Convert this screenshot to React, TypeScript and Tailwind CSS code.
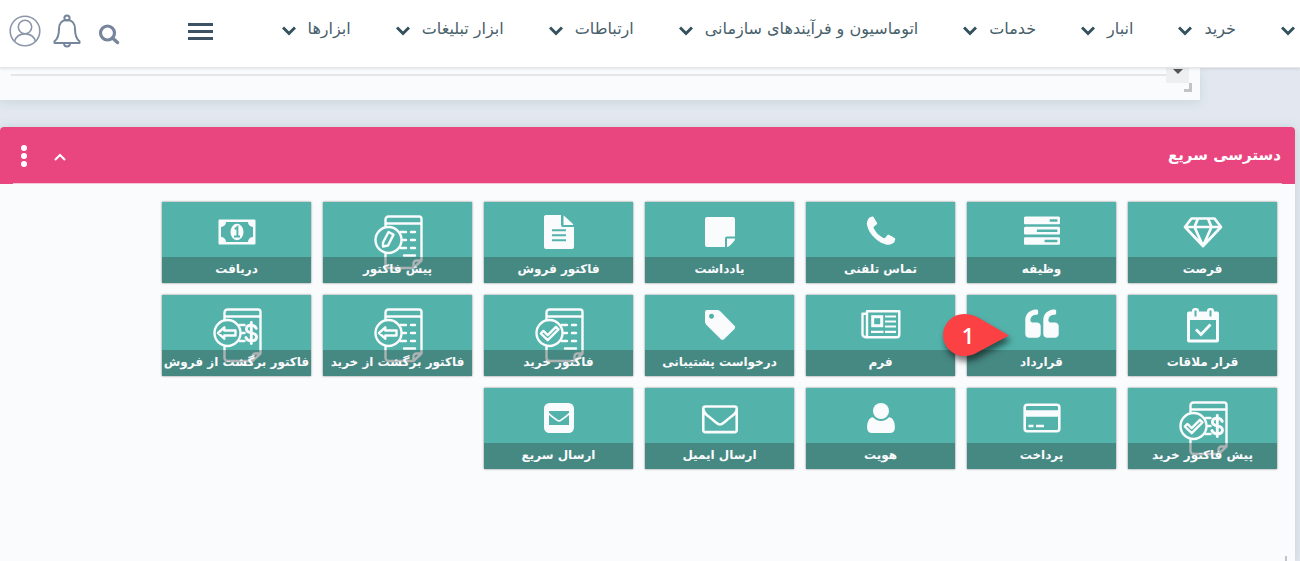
import type { ReactNode } from "react";

const Glyph = ({ d, className }: { d: string; className: string }) => (
  <svg viewBox="0 0 1792 1792" className={className} fill="currentColor" aria-hidden="true">
    <path d={d} />
  </svg>
);

const TASKS =
  "M1024 1408h640v-128h-640v128zm-384-512h1024v-128h-1024v128zm640-512h384v-128h-384v128zm512 832v256q0 26-19 45t-45 19h-1664q-26 0-45-19t-19-45v-256q0-26 19-45t45-19h1664q26 0 45 19t19 45zm0-512v256q0 26-19 45t-45 19h-1664q-26 0-45-19t-19-45v-256q0-26 19-45t45-19h1664q26 0 45 19t19 45zm0-512v256q0 26-19 45t-45 19h-1664q-26 0-45-19t-19-45v-256q0-26 19-45t45-19h1664q26 0 45 19t19 45z";
const PHONE =
  "M1600 1240q0 27-10 70.5t-21 68.5q-21 50-122 106-94 51-186 51-27 0-53-3.5t-57.5-12.5-47-14.5-55.5-20.5-49-18q-98-35-175-83-127-79-264-216t-216-264q-48-77-83-175-3-9-18-49t-20.5-55.5-14.5-47-12.5-57.5-3.5-53q0-92 51-186 56-101 106-122 25-11 68.5-21t70.5-10q14 0 21 3 18 6 53 76 11 19 30 54t35 63.5 31 53.5q3 4 17.5 25t21.5 35.5 7 28.5q0 20-28.5 50t-62 55-62 53-28.5 46q0 9 5 22.5t8.5 20.5 14 24 11.5 19q76 137 174 235t235 174q2 1 19 11.5t24 14 20.5 8.5 22.5 5q18 0 46-28.5t53-62 55-62 50-28.5q14 0 28.5 7t35.5 21.5 25 17.5q25 15 53.5 31t63.5 35 54 30q70 35 76 53 3 7 3 21z";
const QUOTE =
  "M832 960v384q0 80-56 136t-136 56h-384q-80 0-136-56t-56-136v-704q0-104 40.5-198.5t109.5-163.5 163.5-109.5 198.5-40.5h64q26 0 45 19t19 45v128q0 26-19 45t-45 19h-64q-106 0-181 75t-75 181v32q0 40 28 68t68 28h224q80 0 136 56t56 136zm896 0v384q0 80-56 136t-136 56h-384q-80 0-136-56t-56-136v-704q0-104 40.5-198.5t109.5-163.5 163.5-109.5 198.5-40.5h64q26 0 45 19t19 45v128q0 26-19 45t-45 19h-64q-106 0-181 75t-75 181v32q0 40 28 68t68 28h224q80 0 136 56t56 136z";
const ENVELOPE =
  "M1664 1504v-768q-32 36-69 66-268 206-426 338-51 43-83 67t-86.5 48.5-102.5 24.5h-2q-48 0-102.5-24.5t-86.5-48.5-83-67q-158-132-426-338-37-30-69-66v768q0 13 9.5 22.5t22.5 9.5h1472q13 0 22.5-9.5t9.5-22.5zm0-1051v-24.5l-.5-13-3-12.5-5.5-9-9-7.5-14-2.5h-1472q-13 0-22.5 9.5t-9.5 22.5q0 168 147 284 193 152 401 317 6 5 35 29.5t46 37.5 44.5 31.5 50.5 27.5 43 9h2q20 0 43-9t50.5-27.5 44.5-31.5 46-37.5 35-29.5q208-165 401-317 54-43 100.5-115.5t46.5-131.5zm128-37v1088q0 66-47 113t-113 47h-1472q-66 0-113-47t-47-113v-1088q0-66 47-113t113-47h1472q66 0 113 47t47 113z";

/* Icons below share a 48x56 box whose centre column is the tile's centre. */
const Box = ({ children }: { children: ReactNode }) => (
  <svg viewBox="0 0 48 56" className="h-14 w-12 overflow-visible" fill="none" stroke="none" aria-hidden="true">
    {children}
  </svg>
);

const Diamond = () => (
  <Box>
    <path
      d="M12.500 4.500h23L42 13 24 32 6 13z M6 13h36 M19 4.500 15.500 13 24 32l8.500-19L29 4.500"
      stroke="currentColor"
      strokeWidth="2.700"
      strokeLinejoin="round"
    />
  </Box>
);

const Note = () => (
  <Box>
    <path
      fill="currentColor"
      d="M11 3h26a2 2 0 0 1 2 2v17.500h-8a2 2 0 0 0-2 2V33H11a2 2 0 0 1-2-2V5a2 2 0 0 1 2-2z M31 24.500h8c0 1.200-.4 2.200-1.200 3l-3.800 4c-.8.900-1.800 1.400-3 1.500z"
    />
  </Box>
);

const FileText = () => (
  <Box>
    <path
      fill="currentColor"
      fillRule="evenodd"
      d="M10.500 1H26v10a2 2 0 0 0 2 2h11v20a2 2 0 0 1-2 2H11a2 2 0 0 1-2-2V3a2 2 0 0 1 1.500-2z M17 15.300v2h14v-2z M17 20.300v2h14v-2z M17 25.300v2h14v-2z"
    />
    <path fill="currentColor" d="M28.500 1.500c.5.200 1 .5 1.400 1l7.600 7.100c.4.400.7.900.9 1.400h-9.900z" />
  </Box>
);

const Money = () => (
  <Box>
    <path
      fill="currentColor"
      fillRule="evenodd"
      d="M6.500 5.500h35a1 1 0 0 1 1 1v23a1 1 0 0 1-1 1h-35a1 1 0 0 1-1-1v-23a1 1 0 0 1 1-1z M13 8a5 5 0 0 1-5 5v10a5 5 0 0 1 5 5h22a5 5 0 0 1 5-5V13a5 5 0 0 1-5-5z"
    />
    <ellipse cx="24" cy="18" rx="6.500" ry="8.200" fill="currentColor" />
    <path d="M21.800 15.300l2.600-2.300v9.500M21 22.500h6" stroke="#53b3ab" strokeWidth="1.900" />
  </Box>
);

const Calendar = () => (
  <Box>
    <path
      fill="currentColor"
      fillRule="evenodd"
      d="M10 4.500h28a2 2 0 0 1 2 2v27a2 2 0 0 1-2 2H10a2 2 0 0 1-2-2v-27a2 2 0 0 1 2-2z M11 13v19.500h26V13z"
    />
    <rect x="13" y="1" width="7" height="9" rx="3" fill="currentColor" />
    <rect x="28" y="1" width="7" height="9" rx="3" fill="currentColor" />
    <path d="M16.500 3.500v6M31.500 3.500v6" stroke="#53b3ab" strokeWidth="2" />
    <path d="M17 22.500l5 5 9.500-10" stroke="currentColor" strokeWidth="2.800" />
  </Box>
);

const Newspaper = () => (
  <Box>
    <g stroke="currentColor" strokeWidth="2.400">
      <path d="M10 30.300c-3 0-4.500-1-4.500-3V6.700H10M10 28V4.200h32.300v23.600c0 1.700-1 2.500-2.600 2.500H8.500c1 0 1.500-1 1.500-2.300z" strokeLinejoin="round" />
      <rect x="15.700" y="9.700" width="9" height="9" strokeWidth="3" />
      <path d="M28 9.500h11M28 14.500h11M28 19.500h11M14 24.800h12.500M28 24.800h11" strokeWidth="2.200" />
    </g>
  </Box>
);

const Tag = () => (
  <Box>
    <path
      fill="currentColor"
      fillRule="evenodd"
      d="M11 3h10c1.300 0 2.500.5 3.500 1.500l14 14.300c.9.900.9 2.200 0 3.100L28 32.300c-.9.900-2.200.9-3.100 0L10.500 18C9.500 17 9 15.800 9 14.500V5a2 2 0 0 1 2-2z M15.500 6.800a2.500 2.500 0 1 0 .01 0z"
    />
  </Box>
);

const Card = () => (
  <Box>
    <rect x="6.700" y="4.700" width="34.600" height="26.600" rx="2.500" stroke="currentColor" strokeWidth="2.600" />
    <path d="M6 13.500h36" stroke="currentColor" strokeWidth="6.500" />
    <path d="M10.500 26h5M18 26h8" stroke="currentColor" strokeWidth="2.600" />
  </Box>
);

const User = () => (
  <Box>
    <circle cx="24" cy="11" r="8" fill="currentColor" />
    <path
      fill="currentColor"
      d="M16 17.200c2 2.400 4.800 3.800 8 3.800s6-1.400 8-3.800c4.300.5 5.900 5 5.900 10.500 0 3.400-1.900 5.300-5 5.300H15.100c-3.100 0-5-1.900-5-5.300 0-5.500 1.600-10 5.900-10.500z"
    />
  </Box>
);

const MailSquare = () => (
  <Box>
    <rect x="9" y="3" width="30" height="30" rx="5.500" fill="currentColor" />
    <path d="M14 11h20v1.700c-3 2.800-6 4.900-8.500 6.700-1.200.8-1.800.8-3 0-2.500-1.800-5.500-3.900-8.500-6.700z" fill="#53b3ab" />
    <path d="M14 15c2.700 2.300 5.300 4.200 7.500 5.700 1.900 1.300 3.100 1.300 5 0 2.200-1.500 4.800-3.400 7.500-5.700v10H14z" fill="#53b3ab" />
  </Box>
);

type Mark = "pencil" | "check" | "arrow";

const MARKS: Record<Mark, string> = {
  pencil: "M9 32.500v-4l5.500-10.500 5 2.600L14 31.500z",
  check: "M5.800 26.500l2.600-2.600 4.300 4.300 8.200-8.400 2.600 2.600L12.700 33.200z",
  arrow: "M5 26l6.300-5.700v3.200h11.200v5H11.300v3.200z",
};

const Invoice = ({ mark, dollar }: { mark: Mark; dollar?: boolean }) => (
  <Box>
    <g stroke="currentColor" strokeWidth="2.400" strokeLinecap="round" strokeLinejoin="round">
      <path d="M11.500 12.500V5.500a3 3 0 0 1 3-3H45A2.500 2.500 0 0 1 47.500 5v41.500L39.500 54H14.500a3 3 0 0 1-3-3V40M11.500 9.500h36M39.500 53.500V49.500a3 3 0 0 1 3-3h5" />
      <circle cx="14.500" cy="26" r="13" />
      <path d={MARKS[mark]} />
      {dollar ? (
        <>
          <path d="M26.500 18h5M28.500 26h3M26.500 34h5" />
          <path
            d="M43.200 21.300c-.8-2-2.500-3.100-4.900-3.100-3 0-4.900 1.400-4.900 3.700 0 2.200 1.800 3.300 4.900 3.900 3.300.7 5.200 1.700 5.200 4.200 0 2.400-2.100 3.900-5.200 3.900-2.800 0-4.600-1.100-5.400-3.300M38.300 15.500v21"
            strokeWidth="2.900"
          />
        </>
      ) : (
        <path d="M26.500 18h5.500M37 18h4M28.500 26H32M37 26h4M26.500 34h5.500M37 34h4M30 41.500h11" />
      )}
    </g>
  </Box>
);

interface Tile {
  label: string;
  icon: ReactNode;
  pin?: boolean;
}

const tiles: Tile[] = [
  { label: "فرصت", icon: <Diamond /> },
  { label: "وظیفه", icon: <Glyph d={TASKS} className="h-9 w-9" /> },
  { label: "تماس تلفنی", icon: <Glyph d={PHONE} className="h-9 w-9" /> },
  { label: "یادداشت", icon: <Note /> },
  { label: "فاکتور فروش", icon: <FileText /> },
  { label: "پیش فاکتور", icon: <Invoice mark="pencil" /> },
  { label: "دریافت", icon: <Money /> },
  { label: "قرار ملاقات", icon: <Calendar /> },
  { label: "قرارداد", icon: <Glyph d={QUOTE} className="h-9 w-9" />, pin: true },
  { label: "فرم", icon: <Newspaper /> },
  { label: "درخواست پشتیبانی", icon: <Tag /> },
  { label: "فاکتور خرید", icon: <Invoice mark="check" /> },
  { label: "فاکتور برگشت از خرید", icon: <Invoice mark="arrow" /> },
  { label: "فاکتور برگشت از فروش", icon: <Invoice mark="arrow" dollar /> },
  { label: "پیش فاکتور خرید", icon: <Invoice mark="check" dollar /> },
  { label: "پرداخت", icon: <Card /> },
  { label: "هویت", icon: <User /> },
  { label: "ارسال ایمیل", icon: <Glyph d={ENVELOPE} className="h-9 w-9" /> },
  { label: "ارسال سریع", icon: <MailSquare /> },
];

const menus = [
  "خرید",
  "انبار",
  "خدمات",
  "اتوماسیون و فرآیندهای سازمانی",
  "ارتباطات",
  "ابزار تبلیغات",
  "ابزارها",
];

const Chevron = () => (
  <svg viewBox="0 0 14 10" className="mt-1 h-[10px] w-[14px] shrink-0" fill="none" stroke="#34515e" strokeWidth="3" aria-hidden="true">
    <path d="M1 1.500l6 6 6-6" />
  </svg>
);

const Pin = () => (
  <span className="absolute top-[19px] -left-6 z-10 block h-12 w-18">
    <svg viewBox="0 0 72 48" className="absolute inset-0 h-12 w-18 overflow-visible drop-shadow-[2px_5px_3px_rgba(0,0,0,0.55)]" aria-hidden="true">
      <path d="M21 0C27 0 31 1.500 36 4l30 17.500-30 16C31 40.500 27 42 21 42A21 21 0 0 1 21 0z" fill="#fc4144" />
    </svg>
    <span className="absolute top-0 left-0 w-[50px] text-center font-['Open_Sans',sans-serif] text-[22px] leading-[43px] font-semibold text-white">1</span>
  </span>
);

export default function App() {
  return (
    <div dir="rtl" className="flex min-h-screen flex-col overflow-x-hidden bg-[#e3e8f0] font-['DejaVu_Sans',sans-serif]">
      <header className="relative z-20 flex h-[68px] items-start justify-between border-b border-[#e4e6e8] bg-white shadow-[0_1px_3px_rgba(0,0,0,0.1)]">
        <nav className="flex h-[58px] items-center gap-[45px] whitespace-nowrap pr-[5px]">
          <button type="button" aria-label="منو" className="flex items-center">
            <Chevron />
          </button>
          {menus.map((m) => (
            <button key={m} type="button" className="flex items-center gap-3 text-[16px] leading-6 text-[#47606b]">
              {m}
              <Chevron />
            </button>
          ))}
        </nav>
        <div dir="ltr" className="flex h-[62px] shrink-0 items-center pl-[9px] text-[#76859b]">
          <button type="button" aria-label="حساب کاربری">
            <svg viewBox="0 0 32 32" className="h-8 w-8" fill="none" stroke="#8b97a9" strokeWidth="1.600" aria-hidden="true">
              <circle cx="16" cy="16" r="14.800" />
              <circle cx="16" cy="12" r="6.700" />
              <path d="M5.500 26.500C7 21.500 11 18.900 16 18.900s9 2.600 10.500 7.600" />
            </svg>
          </button>
          <button type="button" aria-label="اعلان‌ها" className="ml-3">
            <svg viewBox="0 0 28 34" className="h-[34px] w-7" fill="none" stroke="currentColor" strokeWidth="2" strokeLinejoin="round" aria-hidden="true">
              <circle cx="14" cy="4" r="2.600" />
              <path d="M14 6c-5.500 0-8 4-8 9 0 6-.8 9.500-4.500 12.300V29h25v-1.700C22.800 24.500 22 21 22 15c0-5-2.500-9-8-9zM11 29c0 2.200 1.200 3.500 3 3.500s3-1.300 3-3.500" />
            </svg>
          </button>
          <button type="button" aria-label="جستجو" className="mt-2 ml-[17px]">
            <svg viewBox="0 0 22 22" className="h-[22px] w-[22px]" fill="none" stroke="currentColor" aria-hidden="true">
              <circle cx="9.500" cy="9" r="7" strokeWidth="3.200" />
              <path d="M14.500 14l5 4.500" strokeWidth="3.400" strokeLinecap="round" />
            </svg>
          </button>
          <button type="button" aria-label="فهرست" className="ml-[68px] flex w-[25px] flex-col gap-1">
            <span className="h-[3px] bg-[#3d5263]" />
            <span className="h-[3px] bg-[#3d5263]" />
            <span className="h-[3px] bg-[#3d5263]" />
          </button>
        </div>
      </header>

      <section className="relative mr-[100px] h-8 bg-[#fafbfd] shadow-[0_3px_10px_rgba(160,185,185,0.35)]">
        <div className="flex h-[15px] items-start pr-[11px] pl-[11px]">
          <div className="flex h-[15px] w-[23px] justify-center bg-[#eeeff1]">
            <span className="mt-px h-0 w-0 border-x-[5px] border-t-[5px] border-x-transparent border-t-[#555]" />
          </div>
          <div className="mt-1.5 h-[2px] grow bg-[#e5e6e8]" />
        </div>
        <span className="mr-2 block h-[9px] w-2 border-r-[3px] border-b-[3px] border-[#c2c3c5]" />
      </section>

      <section className="mt-[27px] mr-[5px] flex grow flex-col rounded-t bg-[#fafbfd] shadow-[0_0_10px_rgba(160,185,185,0.45)]">
        <div className="flex h-[57px] items-center justify-between rounded-t bg-[#e9467f] pr-[14px] pl-5">
          <h2 className="text-[15px] font-bold text-white">دسترسی سریع</h2>
          <div className="flex items-center gap-[26px] text-white">
            <button type="button" aria-label="جمع کردن">
              <svg viewBox="0 0 12 8" className="mt-0.5 h-2 w-3" fill="none" stroke="currentColor" strokeWidth="2" aria-hidden="true">
                <path d="M1 7l5-5 5 5" />
              </svg>
            </button>
            <button type="button" aria-label="گزینه‌ها">
              <svg viewBox="0 0 8 24" className="h-6 w-2" fill="currentColor" aria-hidden="true">
                <circle cx="4" cy="4" r="3" />
                <circle cx="4" cy="12" r="3" />
                <circle cx="4" cy="20" r="3" />
              </svg>
            </button>
          </div>
        </div>
        <div className="mx-[13px] -mt-px h-px bg-[#f0c9d5]" />

        <div className="flex grow flex-wrap content-start gap-3 pt-[18px] pr-[18px] pl-4">
          {tiles.map((t) => (
            <div key={t.label} className="relative">
              <button type="button" className="flex h-[81px] w-[149px] flex-col items-center overflow-hidden bg-[#53b3ab] text-[#fafbfd] shadow-[0_0_2px_rgba(0,0,0,0.5)]">
                <span className="flex h-[55px] items-start pt-3">{t.icon}</span>
                <span className="relative flex h-[26px] w-full items-center justify-center whitespace-nowrap bg-[#344946]/40 pb-0.5 text-[12px] font-bold">
                  {t.label}
                </span>
              </button>
              {t.pin && <Pin />}
            </div>
          ))}
        </div>
        <span className="mr-2 block h-[5px] w-[2px] bg-[#c2c3c5]" />
      </section>
    </div>
  );
}
